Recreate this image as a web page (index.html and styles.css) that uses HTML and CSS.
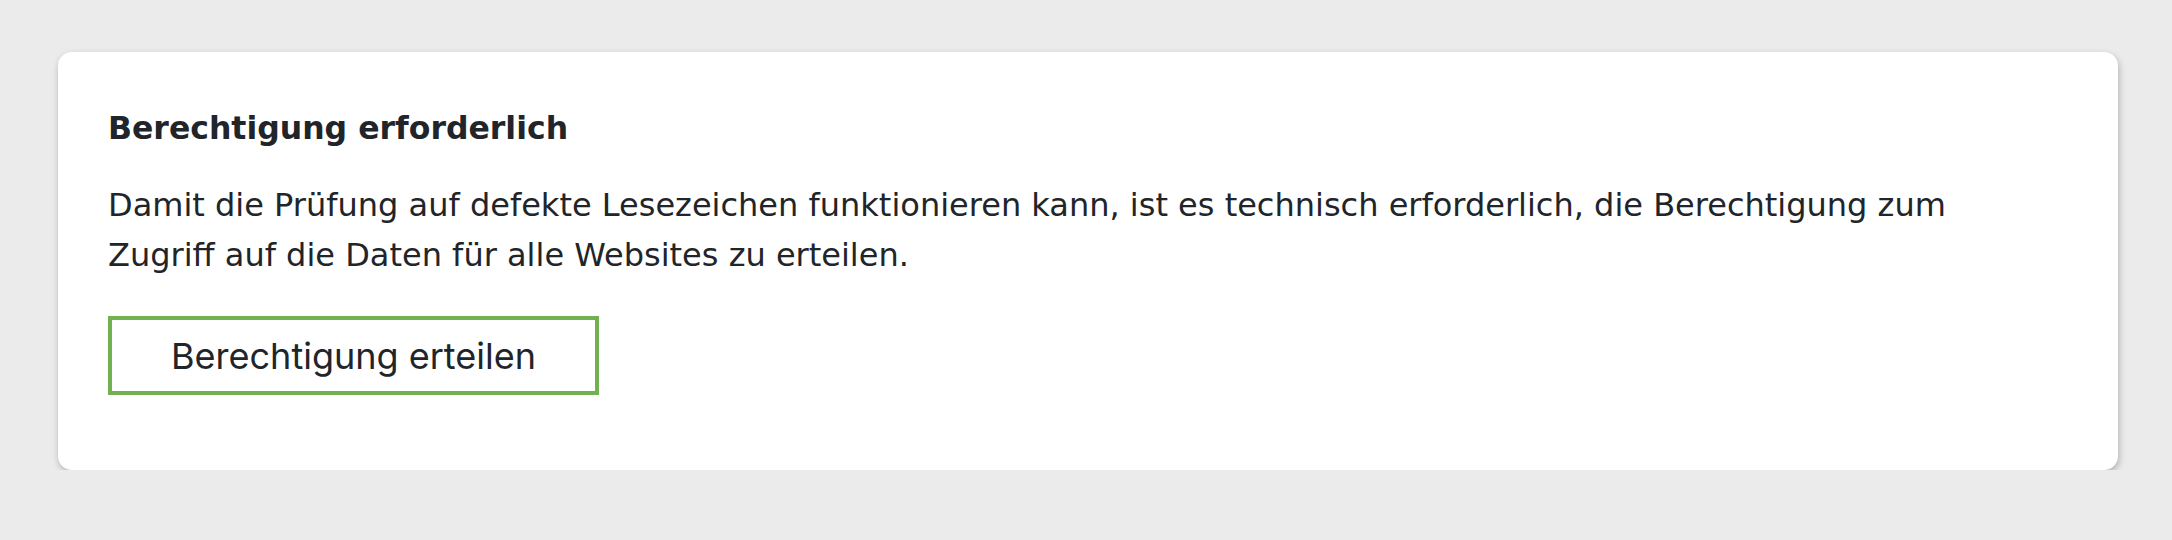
FILE: index.html
```html
<!DOCTYPE html>
<html lang="de">
<head>
    <meta charset="UTF-8">
    <meta name="viewport" content="width=device-width, initial-scale=1.0">
    <title>Berechtigung erforderlich</title>
    <link rel="stylesheet" href="styles.css">
</head>
<body>
    <div class="card">
        <h2>Berechtigung erforderlich</h2>
        <p>Damit die Prüfung auf defekte Lesezeichen funktionieren kann, ist es technisch erforderlich, die Berechtigung zum Zugriff auf die Daten für alle Websites zu erteilen.</p>
        <button class="grant" type="button">Berechtigung erteilen</button>
    </div>
</body>
</html>
```

FILE: styles.css
```css
body {
    margin: 0;
    padding: 52px 54px 0 58px;
    background-color: #ebebeb;
    font-family: 'DejaVu Sans', Verdana, sans-serif;
    color: #212529;
}

.card {
    background-color: #ffffff;
    border-radius: 14px;
    box-shadow: 1px 3px 7px rgba(0, 0, 0, 0.25);
    padding: 56px 50px 75px;
}

h2 {
    margin: 0 0 32px;
    font-size: 31.5px;
    line-height: 40px;
    font-weight: bold;
}

p {
    margin: 0 0 36px;
    max-width: 1880px;
    font-size: 32px;
    line-height: 50px;
}

.grant {
    display: block;
    width: 491px;
    height: 79px;
    padding: 0;
    background-color: #ffffff;
    border: 4px solid #72b14f;
    border-radius: 0;
    font-family: 'Inter', 'Liberation Sans', sans-serif;
    font-size: 36px;
    color: #212529;
    cursor: pointer;
}
```
